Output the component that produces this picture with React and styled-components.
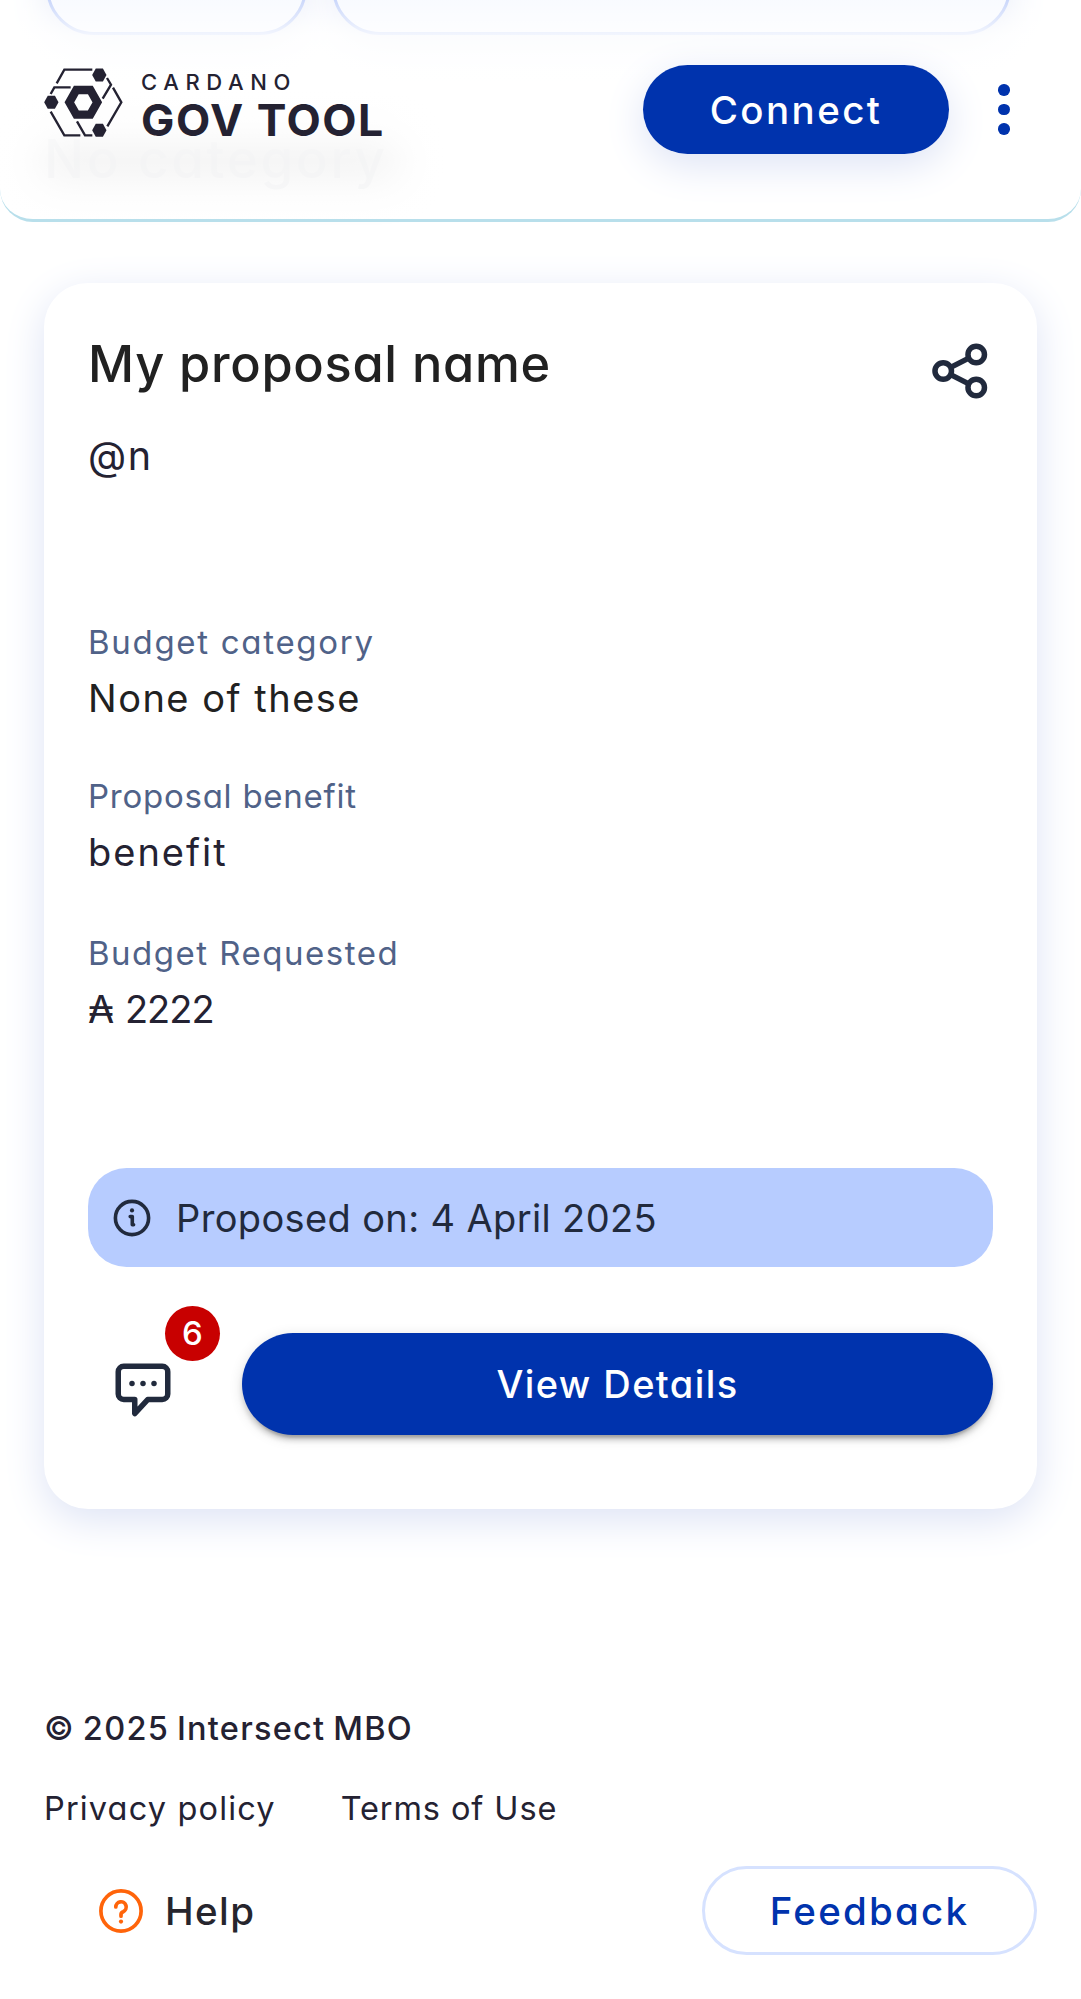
import React from "react";
import styled, { createGlobalStyle } from "styled-components";

const ink = "#242232";
const slate = "#212a3d";
const blue = "#0033ad";

const GlobalStyle = createGlobalStyle`
  * { box-sizing: border-box; }
  body {
    margin: 0;
    background: #fff;
    font-family: Inter, "Open Sans", "DejaVu Sans", sans-serif;
    font-feature-settings: "cv11" 1, "calt" 0;
    color: ${ink};
  }
  button { font: inherit; font-feature-settings: inherit; border: 0; padding: 0; background: none; }
`;

const Page = styled.div`
  position: relative;
  width: 1081px;
  height: 1999px;
  overflow: hidden;
`;

const Header = styled.header`
  position: absolute;
  top: 0;
  left: 0;
  right: 0;
  z-index: 2;
  height: 222px;
  padding: 65px 44px 0;
  display: flex;
  align-items: flex-start;
  border-bottom: 3px solid #b8dfeb;
  border-radius: 0 0 33px 33px;
  background: linear-gradient(rgba(255, 255, 255, 0.1), rgba(255, 255, 255, 0.8) 36px, rgba(255, 255, 255, 0.97) 120px, rgba(255, 255, 255, 0.94) 160px);
`;

const Brand = styled.div`
  display: flex;
  align-items: flex-start;
  margin: 1px auto 0 -2px;
`;

const BrandText = styled.div`
  display: flex;
  flex-direction: column;
  margin-left: 17px;
  padding-top: 1px;
  white-space: nowrap;
`;

const BrandTop = styled.span`
  font-size: 22px;
  line-height: 30px;
  font-weight: 500;
  letter-spacing: 6.6px;
`;

const BrandName = styled.span`
  margin-top: -3px;
  font-size: 44.5px;
  line-height: 52px;
  font-weight: 650;
  letter-spacing: 1.5px;
`;

const ConnectButton = styled.button`
  width: 306px;
  height: 88.5px;
  border-radius: 45px;
  background: ${blue};
  color: #fff;
  font-size: 38.5px;
  line-height: 90px;
  font-weight: 500;
  letter-spacing: 2.4px;
  box-shadow: 0 11px 41px #dde3f5;
`;

const MenuButton = styled.button`
  width: 66px;
  height: 89px;
  margin: 0 0 0 22px;
  display: flex;
  flex-direction: column;
  align-items: center;
  justify-content: center;
  gap: 8px;
`;

const Dot = styled.span`
  width: 11.5px;
  height: 11.5px;
  border-radius: 50%;
  background: ${blue};
`;

const Filters = styled.div`
  display: flex;
  gap: 25px;
  padding-left: 46px;
  margin-top: -62px;
`;

const FilterPill = styled.div`
  width: ${(p) => p.$width}px;
  height: 97px;
  border: 3px solid #c5d3fa;
  border-radius: 48px;
  background: #f8faff;
  box-shadow: 0 11px 41px #e6ebf8;
`;

const Category = styled.h2`
  position: relative;
  width: 345px;
  margin: 92px 0 0 44px;
  font-size: 53px;
  line-height: 64px;
  font-weight: 500;
  letter-spacing: 2.6px;
  white-space: nowrap;
  color: rgba(40, 50, 70, 0.55);

  &::before {
    content: "";
    position: absolute;
    z-index: -1;
    inset: 14px -6px 15px 0;
    background: rgba(0, 0, 0, 0.95);
    filter: blur(21px);
  }
`;

const Card = styled.article`
  margin: 92px 44px 0;
  height: 1226px;
  padding: 51px 44px 0;
  border-radius: 44px;
  background: #fff;
  box-shadow: 0 11px 41px #dde3f5;
  display: flex;
  flex-direction: column;
`;

const TitleRow = styled.div`
  display: flex;
  justify-content: space-between;
  height: 60px;
`;

const Title = styled.h1`
  margin: 0;
  font-size: 50.5px;
  line-height: 60px;
  font-weight: 520;
  letter-spacing: ${(p) => p.$track}px;
  color: #212121;
`;

const ShareIcon = styled.svg`
  margin: 4px 0 0;
  width: 66px;
  height: 66px;
`;

const Value = styled.p`
  margin: 0;
  font-size: 38px;
  line-height: 50px;
  white-space: nowrap;
  letter-spacing: ${(p) => p.$track || 0}px;
  word-spacing: ${(p) => p.$word || 0}px;
  color: ${(p) => p.$color || ink};
`;

const Author = styled(Value)`
  margin-top: 37px;
  font-size: 39.5px;
`;

const Fields = styled.dl`
  margin: 141px 0 0;
`;

const Field = styled.div`
  height: 101px;
  margin-bottom: ${(p) => p.$after}px;
  display: flex;
  flex-direction: column;
  gap: 11px;
`;

const Label = styled.span`
  font-size: 33px;
  line-height: 40px;
  white-space: nowrap;
  letter-spacing: ${(p) => p.$track}px;
  color: #506288;
`;

const InfoBar = styled.div`
  margin-top: 134px;
  height: 99px;
  border-radius: 38.5px;
  background: #b7ccff;
  display: flex;
  align-items: center;
  padding: 0 0 0 22px;
  gap: 22px;
`;

const Actions = styled.div`
  margin-top: 66px;
  display: flex;
  height: 102px;
`;

const CommentButton = styled.button`
  position: relative;
  width: 154px;
  padding: 17px 0 0 22px;
  text-align: left;
`;

const Badge = styled.span`
  position: absolute;
  left: 77px;
  top: -27px;
  width: 55px;
  height: 55px;
  border-radius: 50%;
  background: #c80000;
  color: #fff;
  font-size: 33px;
  line-height: 54px;
  font-weight: 500;
  text-align: center;
`;

const DetailsButton = styled.button`
  flex: 1;
  border-radius: 51px;
  background: ${blue};
  color: #fff;
  font-size: 38px;
  line-height: 99px;
  font-weight: 500;
  letter-spacing: ${(p) => p.$track}px;
  box-shadow: 0 8.25px 2.75px -5.5px rgba(0, 0, 0, 0.2), 0 5.5px 5.5px rgba(0, 0, 0, 0.14), 0 2.75px 13.75px rgba(0, 0, 0, 0.12);
`;

const Footer = styled.footer`
  margin-top: 199px;
  padding: 0 44px;
`;

const FooterText = styled.span`
  display: block;
  font-size: 32.5px;
  line-height: 42px;
  font-weight: ${(p) => p.$weight || 400};
  letter-spacing: ${(p) => p.$track}px;
  word-spacing: ${(p) => p.$word || 0}px;
  white-space: nowrap;
`;

const Links = styled.nav`
  display: flex;
  gap: 65px;
  margin-top: 38px;
`;

const FooterActions = styled.div`
  display: flex;
  align-items: center;
  justify-content: space-between;
  margin-top: 36px;
`;

const Help = styled.div`
  display: flex;
  align-items: center;
  gap: 22px;
  padding-left: 55px;
  font-size: 38.5px;
  line-height: 50px;
  font-weight: 500;
  color: #26252d;
  letter-spacing: 1.4px;
`;

const HelpText = styled.span`
  padding-top: 1px;
`;

const FeedbackButton = styled.button`
  width: 335px;
  height: 89px;
  border: 3px solid #d6e2ff;
  border-radius: 45px;
  color: ${blue};
  font-size: 38.5px;
  line-height: 84px;
  font-weight: 500;
  letter-spacing: 2.2px;
`;

const hex = (cx, cy, w, h) =>
  [
    [cx - w, cy],
    [cx - w / 2, cy - h],
    [cx + w / 2, cy - h],
    [cx + w, cy],
    [cx + w / 2, cy + h],
    [cx - w / 2, cy + h],
  ]
    .map((p) => p.join(","))
    .join(" ");

function Logo() {
  return (
    <svg width="82" height="74" viewBox="36 33 246 222" fill="none" stroke={ink} strokeWidth="7">
      <path d="M80 85 103 44H187M231 69 243 89 218 131M249 98 274 142 232 214M62 117 73 97H122M62 170 103 241H151M141 199 165 241H187" />
      <polygon points={hex(160, 142, 42, 37)} strokeWidth="25" />
      <g fill={ink} stroke="none">
        <polygon points={hex(208, 60, 21.5, 19.5)} />
        <polygon points={hex(64, 142, 21.5, 19.5)} />
        <polygon points={hex(208, 226, 21.5, 19.5)} />
      </g>
    </svg>
  );
}

export default function App() {
  return (
    <>
      <GlobalStyle />
      <Page>
        <Header>
          <Brand>
            <Logo />
            <BrandText>
              <BrandTop>CARDANO</BrandTop>
              <BrandName>GOV TOOL</BrandName>
            </BrandText>
          </Brand>
          <ConnectButton>Connect</ConnectButton>
          <MenuButton aria-label="Menu">
            <Dot />
            <Dot />
            <Dot />
          </MenuButton>
        </Header>

        <Filters>
          <FilterPill $width={261} />
          <FilterPill $width={679} />
        </Filters>
        <Category>No category</Category>

        <Card>
          <TitleRow>
            <Title $track={0.7}>My proposal name</Title>
            <ShareIcon viewBox="0 0 24 24" fill="none" stroke={slate} strokeWidth="2">
              <circle cx="5.9" cy="12" r="3" />
              <circle cx="17.9" cy="6" r="3" />
              <circle cx="17.9" cy="18" r="3" />
              <path d="M8.6 10.7 15.2 7.3M8.6 13.3 15.2 16.7" />
            </ShareIcon>
          </TitleRow>
          <Author $track={1.5}>@n</Author>

          <Fields>
            <Field $after={53}>
              <Label $track={1.7}>Budget category</Label>
              <Value $track={1.5} $color="#212121">None of these</Value>
            </Field>
            <Field $after={56}>
              <Label $track={0.75}>Proposal benefit</Label>
              <Value $track={2}>benefit</Value>
            </Field>
            <Field $after={0}>
              <Label $track={1.5}>Budget Requested</Label>
              <Value $track={-1} $word={2}>₳ 2222</Value>
            </Field>
          </Fields>

          <InfoBar>
            <svg width="44" height="44" viewBox="0 0 44 44" fill="none" stroke={slate} strokeWidth="3.6" strokeLinecap="round" strokeLinejoin="round">
              <circle cx="22" cy="22" r="16.6" />
              <path d="M20.2 20.6H22.3V28.8H23.6" />
              <circle cx="22" cy="14.4" r="2.1" fill={slate} stroke="none" />
            </svg>
            <Value $track={0.36} $color={slate}>Proposed on: 4 April 2025</Value>
          </InfoBar>

          <Actions>
            <CommentButton aria-label="Comments">
              <svg width="66" height="66" viewBox="0 0 24 24" fill="none" stroke={slate} strokeWidth="2" strokeLinejoin="round">
                <path d="M5 3h14a2 2 0 0 1 2 2v8.1a2 2 0 0 1-2 2h-5.3L9 20.2v-5.1H5a2 2 0 0 1-2-2V5a2 2 0 0 1 2-2z" />
                <g fill={slate} stroke="none">
                  <circle cx="8" cy="9.3" r="1" />
                  <circle cx="12" cy="9.3" r="1" />
                  <circle cx="16" cy="9.3" r="1" />
                </g>
              </svg>
              <Badge>6</Badge>
            </CommentButton>
            <DetailsButton $track={1.4}>View Details</DetailsButton>
          </Actions>
        </Card>

        <Footer>
          <FooterText $weight={500} $track={1.25} $word={-2}>© 2025 Intersect MBO</FooterText>
          <Links>
            <FooterText $track={1.15}>Privacy policy</FooterText>
            <FooterText $track={0.9}>Terms of Use</FooterText>
          </Links>
          <FooterActions>
            <Help>
              <svg width="44" height="44" viewBox="0 0 44 44" fill="none" stroke="#ff640a" strokeWidth="3.7" strokeLinecap="round">
                <circle cx="22" cy="22" r="20.1" />
                <path d="M16.8 18a5.2 5.2 0 1 1 7.4 4.7c-1.6.7-2.2 1.4-2.2 2.8V27.2" />
                <circle cx="22" cy="32.6" r="2.1" fill="#ff640a" stroke="none" />
              </svg>
              <HelpText>Help</HelpText>
            </Help>
            <FeedbackButton>Feedback</FeedbackButton>
          </FooterActions>
        </Footer>
      </Page>
    </>
  );
}
